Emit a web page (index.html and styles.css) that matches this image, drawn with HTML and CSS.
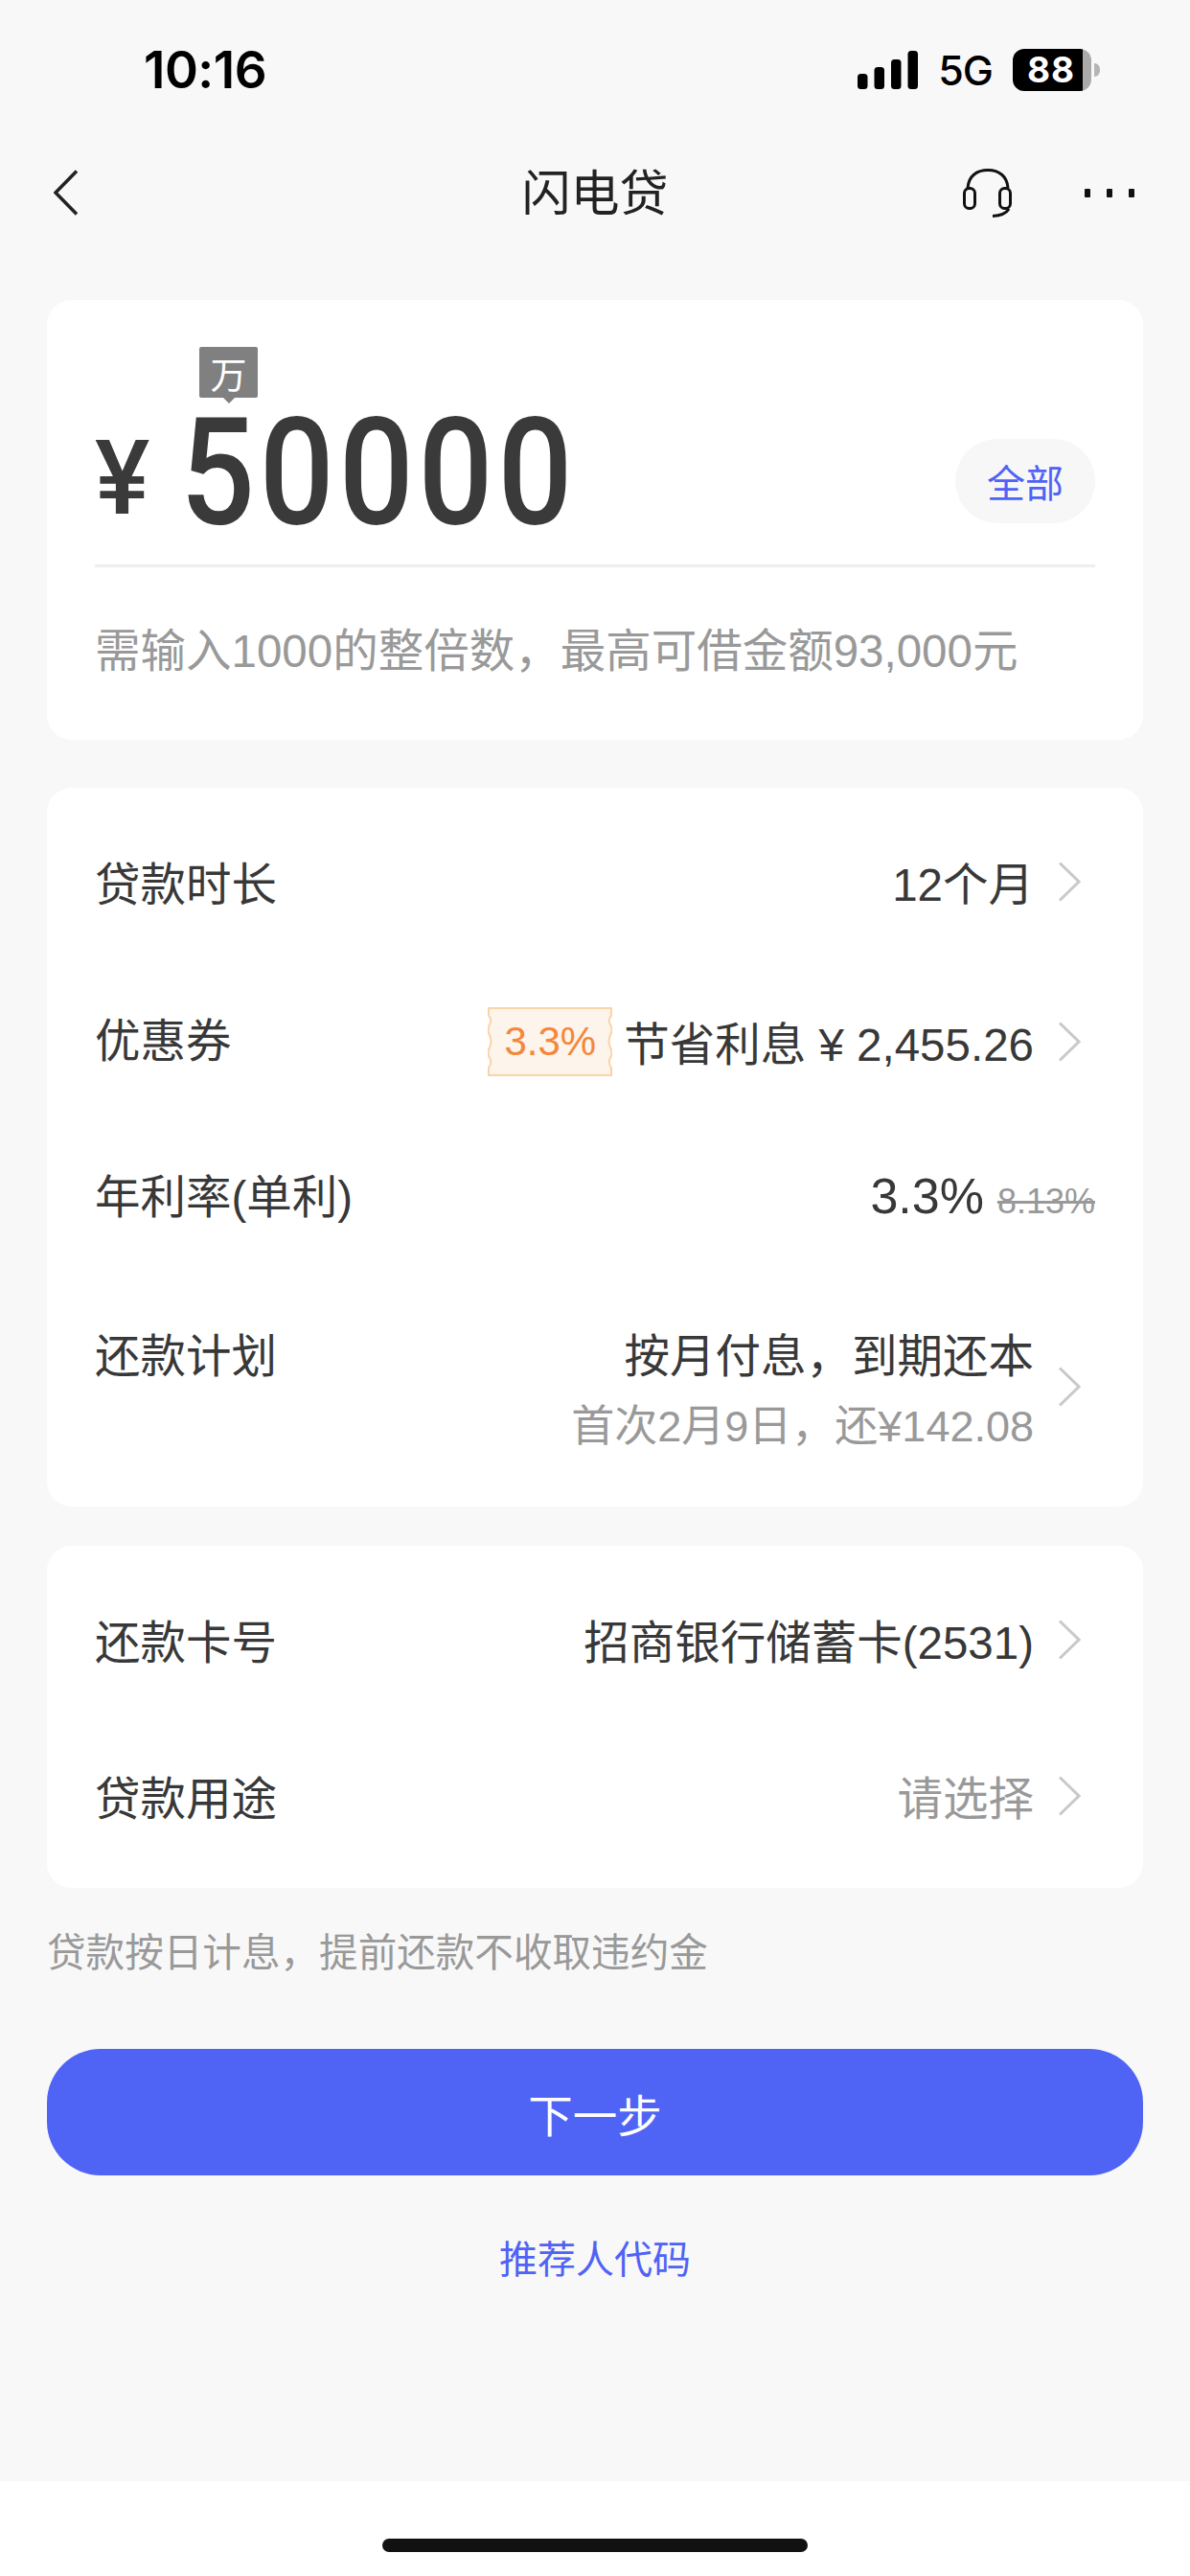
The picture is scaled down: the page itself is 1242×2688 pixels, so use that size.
FILE: index.html
```html
<!DOCTYPE html>
<html lang="zh-CN">

<head>
    <meta charset="UTF-8">
    <meta name="viewport" content="width=device-width, initial-scale=1.0">
    <title>闪电贷</title>
    <link rel="stylesheet" href="styles.css">
</head>

<body>
    <div class="status-bar">
        <span class="time">10:16</span>
        <div class="status-icons">
            <svg class="signal" width="64" height="40" viewBox="0 0 64 40">
                <rect x="0" y="24" width="10.500" height="16" rx="3.500"></rect>
                <rect x="17.500" y="17" width="10.500" height="23" rx="3.500"></rect>
                <rect x="35" y="9" width="10.500" height="31" rx="3.500"></rect>
                <rect x="52.500" y="0" width="10.500" height="40" rx="3.500"></rect>
            </svg>
            <span class="network">5G</span>
            <div class="battery">
                <span class="battery-level">88</span>
                <span class="battery-tip"></span>
            </div>
        </div>
    </div>

    <div class="nav-bar">
        <svg class="nav-back" width="26" height="48" viewBox="0 0 26 48">
            <path d="M24 1.500 L2 24 L24 46.500"></path>
        </svg>
        <h1 class="nav-title">闪电贷</h1>
        <div class="nav-actions">
            <svg class="nav-headset" width="54" height="52" viewBox="0 0 54 52">
                <path d="M6 21 C7 9 15 2.500 27 2.500 C39 2.500 47 9 48 21"></path>
                <rect x="2.500" y="21.500" width="11" height="21" rx="5"></rect>
                <rect x="39.500" y="21.500" width="11" height="21" rx="5"></rect>
                <path d="M49 43 C46 48 41 50 32 50.500"></path>
            </svg>
            <div class="nav-more"><i></i><i></i><i></i></div>
        </div>
    </div>

    <main class="content">
        <section class="card amount-card">
            <div class="amount-row">
                <span class="currency">¥</span>
                <div class="amount-box">
                    <span class="unit-tip">万</span>
                    <span class="amount">50000</span>
                </div>
                <button class="all-btn">全部</button>
            </div>
            <p class="amount-hint">需输入1000的整倍数，最高可借金额93,000元</p>
        </section>

        <section class="card terms-card">
            <div class="row">
                <span class="row-label">贷款时长</span>
                <div class="row-value">
                    <span>12个月</span>
                    <svg class="chevron" width="24" height="42" viewBox="0 0 24 42"><path d="M2 1.500 L22 21 L2 40.500"></path></svg>
                </div>
            </div>
            <div class="row">
                <span class="row-label">优惠券</span>
                <div class="row-value coupon-value">
                    <span class="coupon">
                        <svg class="coupon-bg" width="130" height="72" viewBox="0 0 130 72">
                            <path d="M1 1 H129 V9 Q125 13 128 18 Q131 24 128 29 Q125 36 128 42 Q131 48 128 53 Q125 58 129 63 V71 H1 V63 Q5 58 2 53 Q-1 48 2 42 Q5 36 2 29 Q-1 24 2 18 Q5 13 1 9 Z"></path>
                        </svg>
                        <span class="coupon-text">3.3%</span>
                    </span>
                    <span>节省利息 ¥ 2,455.26</span>
                    <svg class="chevron" width="24" height="42" viewBox="0 0 24 42"><path d="M2 1.500 L22 21 L2 40.500"></path></svg>
                </div>
            </div>
            <div class="row">
                <span class="row-label">年利率(单利)</span>
                <div class="row-value rate-value">
                    <span class="rate">3.3%</span>
                    <s class="rate-old">8.13%</s>
                </div>
            </div>
            <div class="row plan-row">
                <span class="row-label">还款计划</span>
                <div class="row-value">
                    <div class="plan-text">
                        <span>按月付息，到期还本</span>
                        <span class="plan-sub">首次2月9日，还¥142.08</span>
                    </div>
                    <svg class="chevron" width="24" height="42" viewBox="0 0 24 42"><path d="M2 1.500 L22 21 L2 40.500"></path></svg>
                </div>
            </div>
        </section>

        <section class="card bank-card">
            <div class="row">
                <span class="row-label">还款卡号</span>
                <div class="row-value">
                    <span>招商银行储蓄卡(2531)</span>
                    <svg class="chevron" width="24" height="42" viewBox="0 0 24 42"><path d="M2 1.500 L22 21 L2 40.500"></path></svg>
                </div>
            </div>
            <div class="row">
                <span class="row-label">贷款用途</span>
                <div class="row-value">
                    <span class="placeholder">请选择</span>
                    <svg class="chevron" width="24" height="42" viewBox="0 0 24 42"><path d="M2 1.500 L22 21 L2 40.500"></path></svg>
                </div>
            </div>
        </section>

        <p class="notice">贷款按日计息，提前还款不收取违约金</p>
        <button class="next-btn">下一步</button>
        <a class="referrer" href="#">推荐人代码</a>
    </main>

    <footer class="home-area"><span class="home-indicator"></span></footer>
</body>

</html>
```

FILE: styles.css
```css
* {
    box-sizing: border-box;
}

html,
body {
    height: 100%;
}

body {
    display: flex;
    flex-direction: column;
    margin: 0;
    background-color: #f8f8f8;
    color: #383838;
    font-family: "Liberation Sans", "Noto Sans CJK SC", sans-serif;
    font-size: 47.500px;
}

/* status bar */
.status-bar {
    display: flex;
    justify-content: space-between;
    align-items: center;
    height: 146px;
    padding: 0 94px 0 150px;
}

.time {
    color: #000;
    font-family: Inter, sans-serif;
    font-size: 53px;
    font-weight: 600;
    letter-spacing: -0.500px;
}

.status-icons {
    display: flex;
    align-items: center;
    gap: 21px;
}

.signal {
    margin-right: -1px;
}

.signal rect {
    fill: #000;
}

.network {
    color: #000;
    font-family: Inter, sans-serif;
    font-size: 43px;
    font-weight: 500;
    letter-spacing: -1px;
}

.battery {
    display: flex;
    align-items: center;
}

.battery-level {
    width: 82px;
    height: 44px;
    padding-left: 15px;
    border-radius: 12px;
    background: linear-gradient(to right, #000 89%, #aaa 89%);
    color: #fff;
    font-family: Inter, sans-serif;
    font-size: 37px;
    font-weight: 700;
    line-height: 44px;
    letter-spacing: 1px;
}

.battery-tip {
    width: 6px;
    height: 14px;
    margin-left: 3px;
    border-radius: 0 7px 7px 0;
    background-color: #b5b5b5;
}

/* navigation */
.nav-bar {
    position: relative;
    display: flex;
    justify-content: space-between;
    align-items: center;
    height: 110px;
    margin-bottom: 57px;
    padding: 0 58px 0 56px;
}

.nav-back path {
    fill: none;
    stroke: #222;
    stroke-width: 3.500;
}

.nav-title {
    position: absolute;
    left: 0;
    right: 0;
    margin: 0;
    padding-bottom: 6px;
    color: #222;
    font-family: "Noto Sans CJK SC", sans-serif;
    font-size: 51px;
    font-weight: 400;
    text-align: center;
}

.nav-actions {
    display: flex;
    align-items: center;
    gap: 74px;
}

.nav-headset path,
.nav-headset rect {
    fill: none;
    stroke: #111;
    stroke-width: 3;
}

.nav-more {
    display: flex;
    gap: 17px;
}

.nav-more i {
    width: 6px;
    height: 9px;
    border-radius: 1px;
    background-color: #111;
}

/* cards */
.content {
    flex: 1;
    display: flex;
    flex-direction: column;
    padding: 0 49px;
}

.card {
    border-radius: 26px;
    background-color: #fff;
}

.amount-card {
    height: 459px;
    padding: 0 50px;
}

.amount-row {
    display: flex;
    align-items: flex-end;
    height: 279px;
    padding-bottom: 36px;
    border-bottom: 3px solid #eee;
}

.currency {
    width: 89px;
    margin-bottom: 6px;
    color: #3a3a3a;
    font-family: Roboto, sans-serif;
    font-size: 108px;
    font-weight: 500;
    line-height: 96px;
}

.amount-box {
    position: relative;
    height: 120px;
}

/* the digits are drawn narrower than Roboto's own width */
.amount {
    display: block;
    color: #3a3a3a;
    font-family: Roboto, sans-serif;
    font-size: 156px;
    font-weight: 500;
    line-height: 120px;
    letter-spacing: 5.500px;
    transform: scaleX(0.88);
    transform-origin: left center;
}

.unit-tip {
    position: absolute;
    left: 20px;
    top: -71px;
    width: 61px;
    height: 53px;
    border-radius: 2px;
    background-color: #808080;
    color: #fff;
    font-family: "Noto Sans CJK SC", sans-serif;
    font-size: 38px;
    line-height: 53px;
    text-align: center;
}

.unit-tip::after {
    content: "";
    position: absolute;
    left: 25px;
    top: 53px;
    border: 6px solid transparent;
    border-top-color: #808080;
    border-bottom: 0;
}

.all-btn {
    width: 146px;
    height: 88px;
    margin-left: auto;
    margin-bottom: 7px;
    padding: 0;
    border: none;
    border-radius: 44px;
    background-color: #f7f7f7;
    color: #4f63f5;
    font-family: "Noto Sans CJK SC", sans-serif;
    font-size: 40px;
}

.amount-hint {
    margin: 57px 0 0;
    color: #999;
    font-size: 47.500px;
    line-height: 62px;
    white-space: nowrap;
}

.terms-card {
    height: 750px;
    margin-top: 50px;
    padding: 16px 50px 0;
}

.bank-card {
    height: 357px;
    margin-top: 41px;
    padding: 16px 50px 0;
}

.row {
    display: flex;
    justify-content: space-between;
    align-items: center;
    height: 163px;
}

.row-value {
    display: flex;
    align-items: center;
}

.chevron {
    margin-left: 25px;
    margin-right: 15px;
}

.chevron path {
    fill: none;
    stroke: #c9c9c9;
    stroke-width: 3;
}

.coupon-value {
    margin-top: 8px;
}

.coupon {
    position: relative;
    display: flex;
    justify-content: center;
    align-items: center;
    width: 130px;
    height: 72px;
    margin-right: 12px;
}

.coupon-bg {
    position: absolute;
    inset: 0;
}

.coupon-bg path {
    fill: #fdf4ec;
    stroke: #fbd3a8;
    stroke-width: 2;
}

.coupon-text {
    position: relative;
    color: #f5873a;
    font-size: 42px;
}

.rate-value {
    align-items: baseline;
    margin-top: 4px;
}

.rate {
    font-size: 52px;
}

.rate-old {
    margin-left: 14px;
    color: #999;
    font-size: 36px;
}

.plan-row {
    align-items: flex-start;
    height: 240px;
    padding-top: 50px;
}

.plan-text {
    display: flex;
    flex-direction: column;
    align-items: flex-end;
    gap: 6px;
}

.plan-sub {
    color: #999;
    font-size: 45px;
}

.placeholder {
    color: #999;
}

/* footer of the form */
.notice {
    margin: 40px 0 0;
    color: #999;
    font-size: 40.600px;
    line-height: 56px;
}

.next-btn {
    height: 132px;
    margin-top: 72px;
    border: none;
    border-radius: 56px;
    background-color: #4f64f5;
    color: #fff;
    font-family: "Noto Sans CJK SC", sans-serif;
    font-size: 46.500px;
}

.referrer {
    margin-top: 60px;
    color: #4f63f5;
    font-size: 40px;
    line-height: 56px;
    text-align: center;
    text-decoration: none;
}

.home-area {
    display: flex;
    justify-content: center;
    align-items: flex-end;
    height: 99px;
    padding-bottom: 25px;
    background-color: #fff;
}

.home-indicator {
    width: 444px;
    height: 14px;
    border-radius: 7px;
    background-color: #111;
}
```
